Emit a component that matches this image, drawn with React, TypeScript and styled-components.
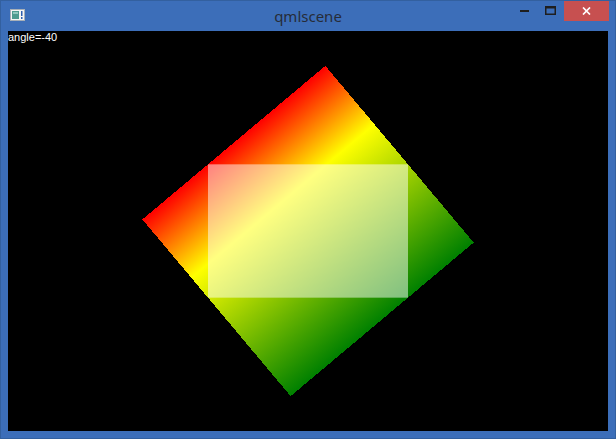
import React from "react";
import styled, { createGlobalStyle } from "styled-components";

const Global = createGlobalStyle`
  html, body {
    margin: 0;
    padding: 0;
    background: #000;
  }
`;

const Window = styled.div`
  width: 616px;
  height: 439px;
  box-sizing: border-box;
  background: #3c6eb9;
  border: 1px solid #33609f;
  display: flex;
  flex-direction: column;
  overflow: hidden;
`;

const TitleBar = styled.div`
  height: 30px;
  display: grid;
  grid-template-columns: 1fr auto 1fr;
  align-items: start;
`;

const IconSlot = styled.div`
  padding: 8px 0 0 9px;
  display: flex;
`;

const Title = styled.div`
  font-family: "Noto Sans", "Open Sans", sans-serif;
  font-size: 15px;
  line-height: 20px;
  color: #262c38;
  padding-top: 5px;
`;

const Buttons = styled.div`
  display: flex;
  justify-content: flex-end;
  padding-right: 6px;
  margin-top: -1px;
`;

const CaptionButton = styled.div<{ $w: number; $close?: boolean }>`
  width: ${(p) => p.$w}px;
  height: 21px;
  display: flex;
  align-items: center;
  justify-content: center;
  background: ${(p) => (p.$close ? "#c75050" : "transparent")};
`;

const Content = styled.div`
  position: relative;
  width: 600px;
  height: 400px;
  margin: 0 7px;
  background: #000;
  overflow: hidden;
`;

const Label = styled.div`
  position: absolute;
  left: 0;
  top: 0;
  font-family: "Liberation Sans", Arial, sans-serif;
  font-size: 11px;
  line-height: 12px;
  color: #fff;
  white-space: nowrap;
`;

const Canvas = styled.svg`
  display: block;
`;

const AppIcon = () => (
  <svg width="15" height="12" viewBox="0 0 15 12">
    <rect x="0.5" y="0.5" width="14" height="11" fill="#f4f4f4" stroke="#a8b0b8" />
    <rect x="2" y="2" width="7" height="8" fill="#4d9b8f" />
    <rect x="3" y="3" width="5" height="2" fill="#8fc7bd" />
    <rect x="11" y="2" width="1.5" height="5" fill="#2d5fb0" />
    <rect x="11" y="8" width="1.5" height="2" fill="#2d5fb0" />
  </svg>
);

const rad = (40 * Math.PI) / 180;
// size of the rotated box that just holds the 200x133 overlay
const w = 200 * Math.cos(rad) + 133.33 * Math.sin(rad);
const h = 200 * Math.sin(rad) + 133.33 * Math.cos(rad);

const App: React.FC = () => {
  return (
    <>
      <Global />
      <Window>
        <TitleBar>
          <IconSlot>
            <AppIcon />
          </IconSlot>
          <Title>qmlscene</Title>
          <Buttons>
            <CaptionButton $w={26}>
              <svg width="9" height="3" viewBox="0 0 9 3">
                <rect x="0" y="1" width="9" height="2" fill="#1e1e1e" />
              </svg>
            </CaptionButton>
            <CaptionButton $w={27}>
              <svg width="11" height="9" viewBox="0 0 11 9">
                <rect x="0.75" y="0.75" width="9.5" height="7.5" fill="none" stroke="#1e1e1e" strokeWidth="1.5" />
                <rect x="0" y="0" width="11" height="2.5" fill="#1e1e1e" />
              </svg>
            </CaptionButton>
            <CaptionButton $w={45} $close>
              <svg width="9" height="8" viewBox="0 0 9 8">
                <path d="M1 0.5 L8 7.5 M8 0.5 L1 7.5" stroke="#fff" strokeWidth="1.7" />
              </svg>
            </CaptionButton>
          </Buttons>
        </TitleBar>
        <Content>
          <Canvas width="600" height="400" viewBox="0 0 600 400">
            <defs>
              <linearGradient id="grad" x1="0" y1="0" x2="0" y2="1">
                <stop offset="0" stopColor="#ff0000" />
                <stop offset="0.33" stopColor="#ffff00" />
                <stop offset="1" stopColor="#008000" />
              </linearGradient>
            </defs>
            <g transform="rotate(-40 300 200)">
              <rect
                x={300 - w / 2}
                y={200 - h / 2}
                width={w}
                height={h}
                fill="url(#grad)"
                shapeRendering="crispEdges"
              />
            </g>
            <rect x="200" y="133.33" width="200" height="133.33" fill="#fff" fillOpacity="0.5" />
          </Canvas>
          <Label>angle=-40</Label>
        </Content>
      </Window>
    </>
  );
};

export default App;
